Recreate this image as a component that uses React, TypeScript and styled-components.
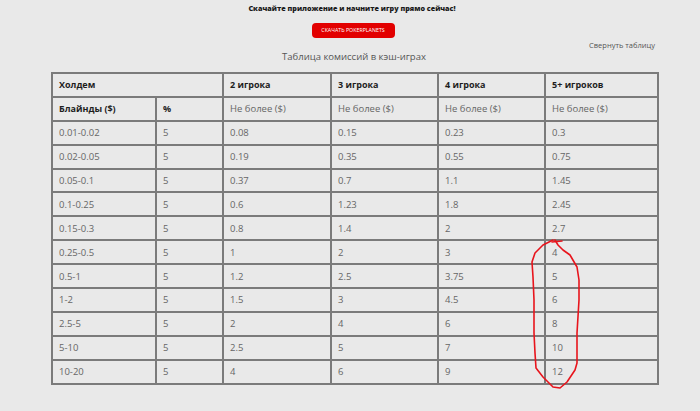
import styled, { createGlobalStyle } from "styled-components";

const GlobalStyle = createGlobalStyle`
  html, body {
    margin: 0;
    padding: 0;
    background: #e9e9e9;
    overflow: hidden;
  }
  body {
    font-family: "Open Sans", "Liberation Sans", sans-serif;
  }
`;

const Page = styled.div`
  display: flex;
  flex-direction: column;
  align-items: center;
  padding-top: 3px;
  height: 411px;
  overflow: hidden;
`;

const Lead = styled.h2`
  margin: 0 0 0 4px;
  font-size: 7.2px;
  line-height: 10px;
  font-weight: 800;
  color: #1a1a1a;
`;

const DownloadButton = styled.a`
  margin-top: 10px;
  margin-left: 6px;
  width: 83px;
  height: 15px;
  flex: 0 0 15px;
  display: flex;
  align-items: center;
  justify-content: center;
  border-radius: 4px;
  background: #e20000;
  color: #fff;
  font-size: 5.3px;
  line-height: 5px;
  text-transform: uppercase;
  cursor: pointer;
`;

const TableBlock = styled.section`
  align-self: flex-start;
  margin-left: 51px;
  width: 606px;
  display: flex;
  flex-direction: column;
`;

const Toggle = styled.a`
  align-self: flex-end;
  margin-top: 2px;
  margin-right: 2px;
  font-size: 7.5px;
  line-height: 10px;
  color: #555;
`;

const Caption = styled.div`
  margin-top: 1px;
  text-align: center;
  font-size: 9.5px;
  line-height: 12px;
  color: #555;
`;

const TableWrap = styled.div`
  position: relative;
  margin-top: 9px;
`;

const Table = styled.table`
  width: 606px;
  border-collapse: collapse;
  table-layout: fixed;
`;

const Cell = styled.td<{ $head?: boolean }>`
  height: 21.9px;
  padding: 0 0 0 6px;
  border: 2px solid #7b7b7b;
  font-size: ${(p) => (p.$head ? "9px" : "9.5px")};
  font-weight: ${(p) => (p.$head ? 700 : 400)};
  color: ${(p) => (p.$head ? "#1e1e1e" : "#666")};
  text-align: left;
  vertical-align: middle;
  white-space: nowrap;
`;

const Mark = styled.svg`
  position: absolute;
  left: 0;
  top: 0;
  width: 606px;
  height: 340px;
  overflow: visible;
  pointer-events: none;
`;

const rows: string[][] = [
  ["0.01-0.02", "5", "0.08", "0.15", "0.23", "0.3"],
  ["0.02-0.05", "5", "0.19", "0.35", "0.55", "0.75"],
  ["0.05-0.1", "5", "0.37", "0.7", "1.1", "1.45"],
  ["0.1-0.25", "5", "0.6", "1.23", "1.8", "2.45"],
  ["0.15-0.3", "5", "0.8", "1.4", "2", "2.7"],
  ["0.25-0.5", "5", "1", "2", "3", "4"],
  ["0.5-1", "5", "1.2", "2.5", "3.75", "5"],
  ["1-2", "5", "1.5", "3", "4.5", "6"],
  ["2.5-5", "5", "2", "4", "6", "8"],
  ["5-10", "5", "2.5", "5", "7", "10"],
  ["10-20", "5", "4", "6", "9", "12"],
];

const widths = [104, 67, 108, 107, 107, 113];

// hand-drawn circle, coords relative to table top-left (51,72)
const loop = [
  [502, 168], [492, 173], [484, 181], [481, 190], [482, 205], [483, 228],
  [483, 261], [484, 281], [485, 296], [492, 305], [502, 315], [509, 316],
  [516, 310], [524, 298], [526, 291], [526, 261], [528, 228], [528, 208],
  [526, 195], [519, 183], [512, 178], [507, 173], [504, 168],
];

export default function App() {
  const d = "M" + loop.map((p) => p.join(" ")).join(" L");
  return (
    <>
      <GlobalStyle />
      <Page>
        <Lead>Скачайте приложение и начните игру прямо сейчас!</Lead>
        <DownloadButton>Скачать PokerPlanets</DownloadButton>
        <TableBlock>
          <Toggle>Свернуть таблицу</Toggle>
          <Caption>Таблица комиссий в кэш-играх</Caption>
          <TableWrap>
            <Table>
              <colgroup>
                {widths.map((w, i) => (
                  <col key={i} style={{ width: w }} />
                ))}
              </colgroup>
              <tbody>
                <tr>
                  <Cell $head colSpan={2}>Холдем</Cell>
                  <Cell $head>2 игрока</Cell>
                  <Cell $head>3 игрока</Cell>
                  <Cell $head>4 игрока</Cell>
                  <Cell $head>5+ игроков</Cell>
                </tr>
                <tr>
                  <Cell $head>Блайнды ($)</Cell>
                  <Cell $head>%</Cell>
                  <Cell>Не более ($)</Cell>
                  <Cell>Не более ($)</Cell>
                  <Cell>Не более ($)</Cell>
                  <Cell>Не более ($)</Cell>
                </tr>
                {rows.map((r) => (
                  <tr key={r[0]}>
                    {r.map((v, i) => (
                      <Cell key={i}>{v}</Cell>
                    ))}
                  </tr>
                ))}
              </tbody>
            </Table>
            <Mark viewBox="0 0 606 340">
              <path
                d={d}
                fill="none"
                stroke="#e8141c"
                strokeWidth="1.6"
                strokeLinejoin="round"
                strokeLinecap="round"
              />
              <path d="M501 170 L511 169" stroke="#e8141c" strokeWidth="1.6" strokeLinecap="round" />
            </Mark>
          </TableWrap>
        </TableBlock>
      </Page>
    </>
  );
}
